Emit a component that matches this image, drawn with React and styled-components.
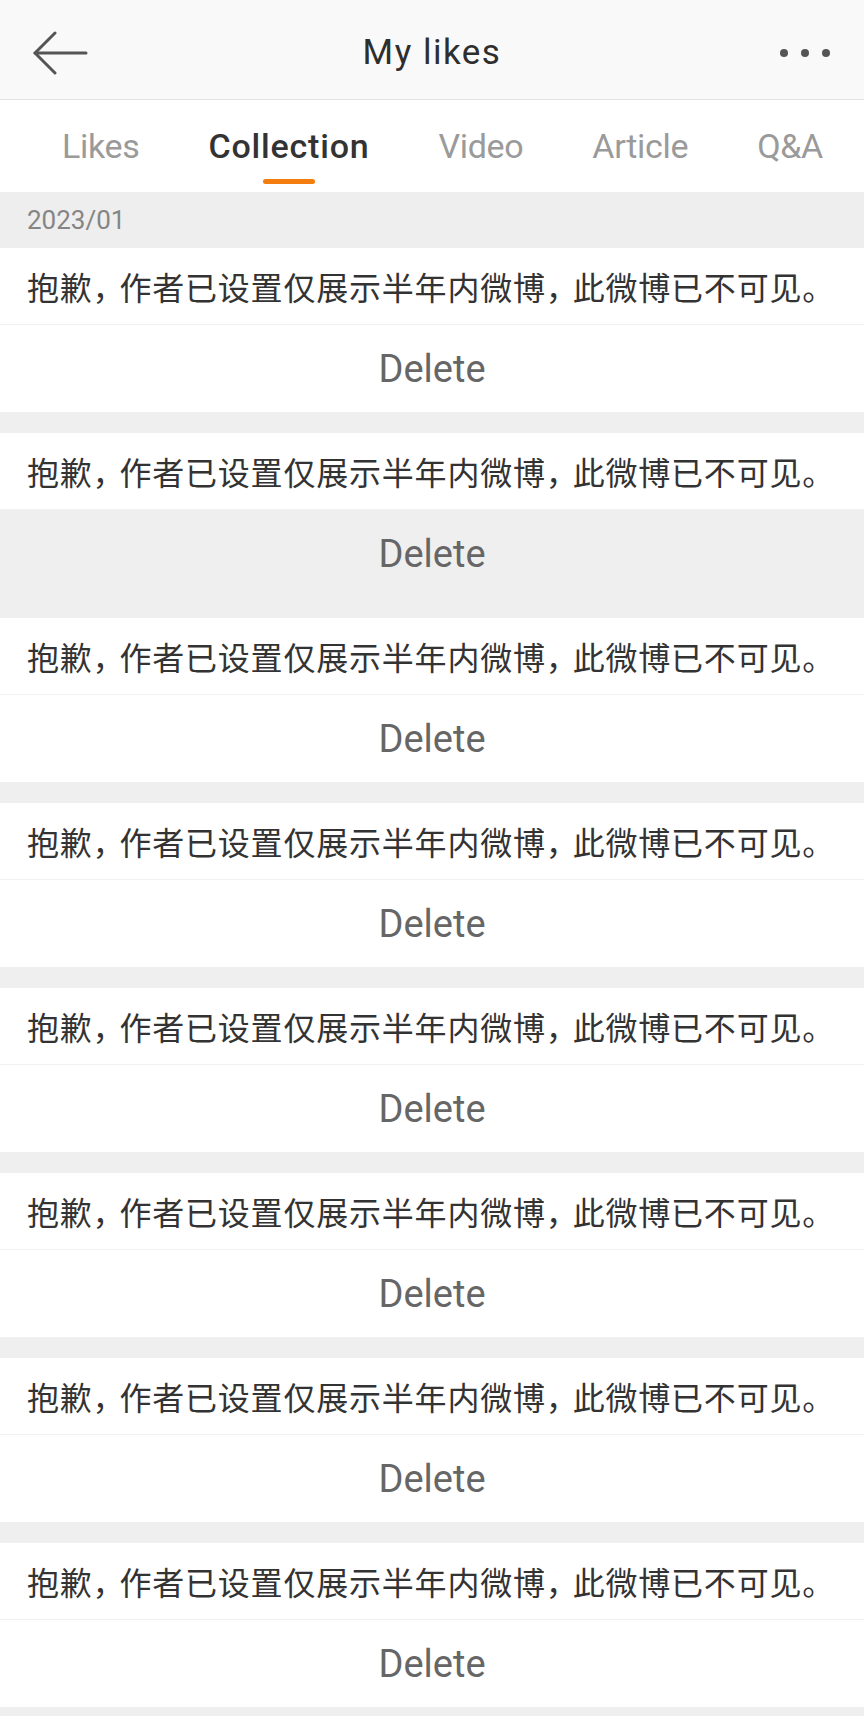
import React from 'react'
import { styled, createGlobalStyle } from 'styled-components'

const GlobalStyle = createGlobalStyle`
  body {
    margin: 0;
    background: #efefef;
    font-family: Roboto, "Noto Sans CJK SC", sans-serif;
  }
`;

const Page = styled.div`
  width: 864px;
  background: #efefef;
`;

const TopBar = styled.div`
  height: 93px;
  padding: 6px 33px 0;
  background: #f9f9f9;
  border-bottom: 1px solid #e2e2e2;

  display: grid;
  grid-template-columns: 1fr auto 1fr;
  align-items: center;
`;

const IconBtn = styled.div`
  display: flex;
  align-items: center;
  justify-content: ${(p) => (p.$right ? 'flex-end' : 'flex-start')};
  color: #555;
`;

const Title = styled.h1`
  margin: 0;
  font-size: 35px;
  font-weight: 400;
  letter-spacing: 1.5px;
  color: #2e2e2e;
`;

const TabBar = styled.div`
  height: 92px;
  background: #fff;
  padding: 0 41px 0 62px;

  display: flex;
  align-items: center;
  justify-content: space-between;
`;

const Tab = styled.div`
  position: relative;
  height: 100%;
  display: flex;
  align-items: center;
  font-size: 34px;
  font-weight: ${(p) => (p.$active ? 500 : 400)};
  letter-spacing: ${(p) => (p.$active ? '0.8px' : '-0.3px')};
  color: ${(p) => (p.$active ? '#333' : '#9a9a9a')};

  &::after {
    content: '';
    display: ${(p) => (p.$active ? 'block' : 'none')};
    position: absolute;
    left: 50%;
    bottom: 8px;
    width: 52px;
    height: 5px;
    margin-left: -26px;
    border-radius: 3px;
    background: #f47d10;
  }
`;

const DateHeader = styled.div`
  height: 56px;
  line-height: 56px;
  padding-left: 27px;
  background: #eeeeee;
  font-size: 26px;
  color: #858585;
`;

const Card = styled.div`
  background: #fff;
  margin-bottom: 21px;
`;

const Notice = styled.div`
  height: 76px;
  padding-left: 27px;
  border-bottom: 1px solid #f1f1f1;

  display: flex;
  align-items: center;
  font-family: "Noto Sans CJK SC", sans-serif;
  font-size: 32px;
  letter-spacing: 0.8px;
  color: #333;
  white-space: nowrap;
`;

const Punct = styled.span`
  font-feature-settings: "halt";
  margin-right: 10px;
`;

const DeleteRow = styled.div`
  height: 87px;
  background: ${(p) => (p.$pressed ? '#efefef' : '#fff')};

  display: flex;
  align-items: center;
  justify-content: center;
  font-size: 38px;
  color: #666;
`;

const BackArrow = () => (
  <svg width="56" height="44" viewBox="0 0 56 44" fill="none" stroke="currentColor" strokeWidth="3" strokeLinecap="round" strokeLinejoin="round">
    <path d="M2 22 H53" />
    <path d="M22 2 L2 22 L22 42" />
  </svg>
);

const MoreDots = () => (
  <svg width="52" height="10" viewBox="0 0 52 10" fill="currentColor">
    <circle cx="5" cy="5" r="4" />
    <circle cx="26" cy="5" r="4" />
    <circle cx="47" cy="5" r="4" />
  </svg>
);

const tabs = ['Likes', 'Collection', 'Video', 'Article', 'Q&A'];
const items = [0, 1, 2, 3, 4, 5, 6, 7];

export default function App() {
  return (
    <Page>
      <GlobalStyle />
      <TopBar>
        <IconBtn>
          <BackArrow />
        </IconBtn>
        <Title>My likes</Title>
        <IconBtn $right>
          <MoreDots />
        </IconBtn>
      </TopBar>
      <TabBar>
        {tabs.map((t) => (
          <Tab key={t} $active={t === 'Collection'}>{t}</Tab>
        ))}
      </TabBar>
      <DateHeader>2023/01</DateHeader>
      {items.map((i) => (
        <Card key={i}>
          <Notice>
            抱歉<Punct>，</Punct>作者已设置仅展示半年内微博<Punct>，</Punct>此微博已不可见。
          </Notice>
          <DeleteRow $pressed={i === 1}>Delete</DeleteRow>
        </Card>
      ))}
    </Page>
  )
}
